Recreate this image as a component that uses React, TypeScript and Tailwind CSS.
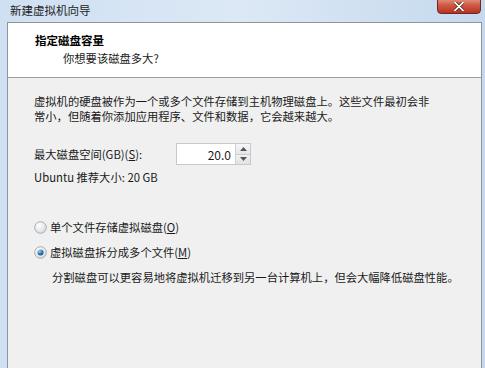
import React from "react";

const font = { fontFamily: '"Noto Sans CJK SC", "Noto Sans", sans-serif' };

function Radio({ checked }: { checked?: boolean }) {
  return (
    <svg width="13" height="13" viewBox="0 0 13 13" className="shrink-0">
      <defs>
        <radialGradient id={checked ? "rgc" : "rgu"} cx="0.35" cy="0.3" r="0.8">
          <stop offset="0" stopColor="#ffffff" />
          <stop offset="1" stopColor="#d4d8dc" />
        </radialGradient>
        <radialGradient id="dot" cx="0.35" cy="0.3" r="0.8">
          <stop offset="0" stopColor="#9fd2f3" />
          <stop offset="0.6" stopColor="#2c6fae" />
          <stop offset="1" stopColor="#1b4e86" />
        </radialGradient>
      </defs>
      <circle cx="6.5" cy="6.5" r="5.8" fill={`url(#${checked ? "rgc" : "rgu"})`} stroke="#a7abb0" strokeWidth="1" />
      {checked && <circle cx="6.5" cy="6.5" r="3" fill="url(#dot)" />}
    </svg>
  );
}

export default function App() {
  return (
    <div
      className="relative w-[485px] h-[368px] overflow-hidden bg-gradient-to-r from-[#cfe0f2] via-[#dce8f5] to-[#c5d9ee] text-[#1a1a1a]"
      style={font}
    >
      {/* title bar */}
      <div className="h-[22px] flex items-center pl-[10px] text-[11.5px] text-[#222] leading-[14px] -translate-y-[1px]">
        新建虚拟机向导
      </div>
      {/* close button */}
      <div className="absolute left-[437px] top-[-4px] w-[44px] h-[18px] rounded-[4px] border border-[#6b2a24] bg-gradient-to-b from-[#e8a493] via-[#cf5a45] to-[#b8301f] flex items-end justify-center pb-[2px]">
        <svg width="10" height="9" viewBox="0 0 10 9">
          <path d="M1 0.5 L9 8.5 M9 0.5 L1 8.5" stroke="#3a0a05" strokeWidth="3.2" strokeLinecap="round" />
          <path d="M1 0.5 L9 8.5 M9 0.5 L1 8.5" stroke="#ffffff" strokeWidth="1.8" strokeLinecap="round" />
        </svg>
      </div>

      {/* body window */}
      <div className="ml-[7px] w-[475px] h-[346px] border-l border-t border-r border-[#8e959c] bg-[#f0f0f0] flex flex-col">
        <div className="h-[55px] bg-white border-b border-[#a0a0a0] flex flex-col pt-[9px]">
          <div className="pl-[27px] text-[11.5px] font-bold leading-[16px] text-black">指定磁盘容量</div>
          <div className="pl-[55px] mt-[2px] text-[11.3px] leading-[16px]">你想要该磁盘多大?</div>
        </div>
        <div className="flex flex-col pl-[26px] pt-[16px] text-[11.3px] leading-[15px]">
          <div>虚拟机的硬盘被作为一个或多个文件存储到主机物理磁盘上。这些文件最初会非</div>
          <div>常小，但随着你添加应用程序、文件和数据，它会越来越大。</div>

          <div className="mt-[19px] flex items-center h-[22px]">
            <div className="w-[142px]">
              最大磁盘空间(GB)(<span className="underline">S</span>):
            </div>
            <div className="w-[75px] h-[22px] border border-[#c5c9ce] bg-white flex items-stretch">
              <div className="flex-1 flex items-center justify-end pr-[4px] text-[12px]">20.0</div>
              <div className="w-[15px] flex flex-col border-l border-[#d0d3d7]">
                <div className="flex-1 flex items-center justify-center border-b border-[#c9ccd0] bg-gradient-to-b from-[#f7f7f7] to-[#e4e6e8]">
                  <svg width="7" height="4" viewBox="0 0 7 4"><path d="M0 4 L3.5 0 L7 4 Z" fill="#555" /></svg>
                </div>
                <div className="flex-1 flex items-center justify-center bg-gradient-to-b from-[#f1f1f1] to-[#e0e2e4]">
                  <svg width="7" height="4" viewBox="0 0 7 4"><path d="M0 0 L3.5 4 L7 0 Z" fill="#555" /></svg>
                </div>
              </div>
            </div>
          </div>

          <div className="mt-[5px]">Ubuntu 推荐大小: 20 GB</div>

          <div className="mt-[35px] flex items-center gap-[3px]">
            <Radio />
            <span>单个文件存储虚拟磁盘(<span className="underline">O</span>)</span>
          </div>
          <div className="mt-[10px] flex items-center gap-[3px]">
            <Radio checked />
            <span>虚拟磁盘拆分成多个文件(<span className="underline">M</span>)</span>
          </div>
          <div className="mt-[10px] pl-[18px]">
            分割磁盘可以更容易地将虚拟机迁移到另一台计算机上，但会大幅降低磁盘性能。
          </div>
        </div>
      </div>
    </div>
  );
}
